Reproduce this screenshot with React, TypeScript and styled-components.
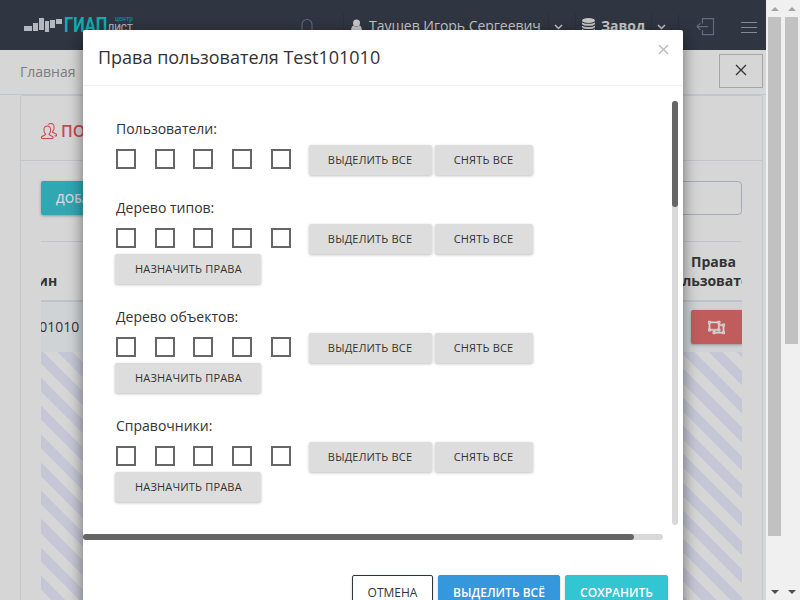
import React from "react";
import styled, { createGlobalStyle } from "styled-components";
import { SlPeople } from "react-icons/sl";
import { FaRegObjectUngroup } from "react-icons/fa";

const GlobalStyle = createGlobalStyle`
  * { box-sizing: border-box; }
  html, body { margin: 0; padding: 0; overflow: hidden; }
  body { font-family: "Open Sans", sans-serif; font-size: 14px; color: #333; }
  button { font-family: inherit; margin: 0; }
`;

const Screen = styled.div`
  position: relative;
  display: flex;
  width: 800px;
  height: 600px;
  overflow: hidden;
  background: #f0f0f0;
`;

const Page = styled.div`
  width: 766px;
  height: 600px;
  overflow: hidden;
  background: #d6d6d6;
`;

const TopBar = styled.header`
  display: flex;
  align-items: flex-start;
  height: 50px;
  background: #2f3541;
  color: #c6c6c6;
`;

const Logo = styled.div`
  display: flex;
  width: 114px;
  height: 20px;
  margin: 16px 0 0 24px;
`;

const LogoName = styled.span`
  margin-left: 2px;
  width: 44px;
  font: 700 19.5px/19px Roboto, sans-serif;
  color: #11abb2;
  transform: scaleX(0.84);
  transform-origin: left;
`;

const LogoSide = styled.span`
  display: flex;
  flex-direction: column;
  width: 25px;
  font: 700 6.5px/7px Roboto, sans-serif;
  color: #11838e;
  text-align: right;
`;

const LogoSub = styled.span`
  font: 500 11px/11px Roboto, sans-serif;
  color: #a9afb8;
  transform: translateX(-4px) scaleX(0.86);
  transform-origin: right;
`;

const Bell = styled.svg`
  width: 14px;
  height: 18px;
  margin: 18px 0 0 162px;
`;

const UserBox = styled.div`
  display: flex;
  height: 36px;
  margin: 14px 0 0 29px;
  padding-left: 7px;
  border-left: 1px solid #2a303b;
  font-size: 14px;
  line-height: 24px;
  white-space: nowrap;
  color: #c6c6c6;
`;

const PersonIcon = styled.svg`
  width: 11px;
  height: 14px;
  margin: 5px 7px 0 0;
`;

const UserName = styled.span`
  width: 179px;
  letter-spacing: -0.03px;
`;

const Caret = styled.svg`
  width: 9px;
  height: 6px;
  margin-top: 10px;
`;

const CaretBox = styled.div`
  display: flex;
  width: 28px;
  height: 36px;
  padding-left: 5px;
  border-left: 1px solid #2a303b;
  border-right: 1px solid #2a303b;
`;

const PlantBox = styled.div`
  display: flex;
  height: 36px;
  margin-top: 14px;
  padding-left: 6px;
  font-size: 14px;
  font-weight: 700;
  line-height: 24px;
`;

const DiskIcon = styled.svg`
  width: 13px;
  height: 14px;
  margin: 4px 6px 0 0;
`;

const PlantName = styled.span`
  width: 50px;
`;

const LogoutIcon = styled.svg`
  width: 19px;
  height: 18px;
  margin: 18px 0 0 17px;
`;

const Burger = styled.div`
  display: flex;
  flex-direction: column;
  width: 16px;
  height: 11px;
  margin: 22px 0 0 26px;
  border: solid #828a93;
  border-width: 1px 0;
  &::before { content: ""; height: 1px; margin-top: 4px; background: #828a93; }
`;

const Crumbs = styled.nav`
  display: flex;
  justify-content: space-between;
  height: 45px;
  padding: 4px 3px 0 20px;
  border-bottom: 1px solid #c1c6cc;
  color: #7d7d7d;
  line-height: 35px;
`;

const CloseTab = styled.button`
  display: flex;
  align-items: center;
  justify-content: center;
  width: 44px;
  height: 34px;
  padding: 0 0 2px;
  background: transparent;
  border: 1px solid #a5a5a5;
`;

const Card = styled.section`
  width: 743px;
  height: 560px;
  margin-left: 20px;
  border: 1px solid #c1c6cf;
  border-radius: 2px;
`;

const CardTitle = styled.div`
  display: flex;
  align-items: center;
  height: 65px;
  padding: 5px 20px 0;
  border-bottom: 1px solid #c3c5cb;
  color: #c8484f;
  font-size: 16px;
  font-weight: 600;
  gap: 4px;
`;

const CardBody = styled.div`
  padding: 20px 20px 0;
`;

const Tools = styled.div`
  display: flex;
  justify-content: space-between;
  height: 34px;
`;

const AddButton = styled.button`
  width: 120px;
  height: 34px;
  padding: 0 15px;
  border: 0;
  border-radius: 2px;
  background: #2fa8b4;
  box-shadow: 0 1px 3px rgba(0, 0, 0, 0.3);
  color: #d6d6d6;
  font-size: 12px;
  font-weight: 600;
  text-align: left;
`;

const SearchInput = styled.input`
  width: 200px;
  height: 34px;
  background: transparent;
  border: 1px solid #a3abb9;
  border-radius: 4px;
`;

const Table = styled.div`
  width: 701px;
  margin-top: 26px;
  overflow: hidden;
  border-top: 1px solid #c3c5cb;
`;

const TableHead = styled.div`
  display: flex;
  justify-content: space-between;
  align-items: flex-end;
  height: 60px;
  padding-bottom: 10px;
  border-bottom: 2px solid #c0c2cb;
  font-weight: 700;
  line-height: 19px;
`;

const LoginHead = styled.span`
  margin-left: -29px;
`;

const RightsHead = styled.span`
  width: 98px;
  margin-right: -20.5px;
  letter-spacing: -0.05px;
  text-align: center;
`;

const TableRow = styled.div`
  display: flex;
  justify-content: space-between;
  align-items: center;
  height: 50px;
  background: #d0d3d6;
`;

const LoginCell = styled.span`
  margin: -2px 0 0 -37px;
`;

const RightsButton = styled.button`
  display: flex;
  align-items: center;
  justify-content: center;
  width: 52px;
  height: 34px;
  margin: 0 -1px 0 0;
  padding: 0;
  border: 0;
  border-radius: 2px;
  background: #c15c5d;
  box-shadow: 0 1px 3px rgba(0, 0, 0, 0.3);
  color: #d6d6d6;
`;

const RightsIcon = styled(FaRegObjectUngroup)`
  width: 17px;
  height: 15px;
  margin-right: 1px;
  stroke: currentColor;
  stroke-width: 14px;
`;

const Stripes = styled.div`
  height: 279.5px;
  background: repeating-linear-gradient(45deg, #d6d6d6 0, #d6d6d6 10px, #c6c7d6 10px, #c6c7d6 20px);
`;

const Scrollbar = styled.div`
  display: flex;
  flex-direction: column;
  align-items: center;
  justify-content: space-between;
  width: 17px;
  height: 600px;
  padding: 7px 0 6px;
`;

const Thumb = styled.div<{ $length: number }>`
  width: 13px;
  height: ${(p) => p.$length}px;
  margin: 6px 0 auto;
  background: #c1c1c1;
`;

const Arrow = styled.i<{ $down?: boolean }>`
  border: solid transparent;
  border-width: ${(p) => (p.$down ? "4px 4px 0" : "0 4px 4px")};
  border-${(p) => (p.$down ? "top" : "bottom")}-color: ${(p) => (p.$down ? "#505050" : "#a3a3a3")};
`;

const Dialog = styled.div`
  position: absolute;
  left: 83px;
  top: 30px;
  width: 600px;
  height: 600px;
  background: #fff;
  border-radius: 2px;
  box-shadow: 0 5px 15px rgba(0, 0, 0, 0.5);
`;

const DialogHead = styled.div`
  display: flex;
  justify-content: space-between;
  height: 56px;
  padding: 14px 14px 0 15px;
  border-bottom: 1px solid #efefef;
  font-size: 18px;
  line-height: 27px;
`;

const CloseIcon = styled.svg<{ $size: number }>`
  width: ${(p) => p.$size}px;
  height: ${(p) => p.$size}px;
`;

const DialogBody = styled.div`
  display: flex;
  justify-content: space-between;
  height: 448px;
  padding: 15px 5px 0 33px;
`;

const Track = styled.div`
  width: 6px;
  height: 424px;
  border-radius: 3px;
  background: #d9d9d9;
  &::before { content: ""; display: block; height: 106px; border-radius: 3px; background: #666; }
`;

const WideTrack = styled.div`
  width: 580px;
  height: 6px;
  border-radius: 3px;
  background: #d9d9d9;
  &::before { content: ""; display: block; width: 551px; height: 6px; border-radius: 3px; background: #666; }
`;

const Groups = styled.div`
  padding-top: 18px;
`;

const Group = styled.div`
  margin-bottom: 23px;
`;

const GroupLabel = styled.div`
  height: 26px;
  line-height: 20px;
`;

const GroupRow = styled.div`
  display: flex;
  height: 30px;
`;

const Box = styled.span`
  flex: none;
  width: 20px;
  height: 20px;
  margin: 4px 18.7px 0 0;
  border: 2px solid #666;
`;

const GreyButton = styled.button<{ $width: number; $shift?: number }>`
  flex: none;
  width: ${(p) => p.$width}px;
  height: 30.4px;
  margin: 0 3px 0 ${(p) => p.$shift ?? 0}px;
  padding: 0;
  border: 0;
  border-radius: 2px;
  background: #ddd;
  box-shadow: 0 1px 3px rgba(0, 0, 0, 0.25);
  color: #333;
  font-size: 11px;
  font-weight: 500;
  letter-spacing: 0.18px;
  line-height: 30px;
  white-space: nowrap;
`;

const DialogFoot = styled.div`
  display: flex;
  justify-content: flex-end;
  gap: 5px;
  padding: 35px 15px 0;
`;

const FootButton = styled.button<{ $width: number; $color?: string }>`
  width: ${(p) => p.$width}px;
  height: 34px;
  padding: 0;
  border: 1px solid ${(p) => p.$color ?? "#2f353b"};
  border-radius: 2px;
  background: ${(p) => p.$color ?? "#fff"};
  box-shadow: 0 1px 3px rgba(0, 0, 0, 0.2);
  color: ${(p) => (p.$color ? "#fff" : "#2f353b")};
  font-size: 12px;
  font-weight: ${(p) => (p.$color ? 600 : 500)};
  white-space: nowrap;
`;

const Chevron = () => (
  <Caret viewBox="0 0 9 6" fill="none" stroke="#c6c6c6" strokeWidth="1.5">
    <path d="M1 1l3.500 3.500L8 1" />
  </Caret>
);

const Cross = ({ size, color, weight }: { size: number; color: string; weight: number }) => (
  <CloseIcon $size={size} viewBox="0 0 12 12" stroke={color} strokeWidth={weight}>
    <path d="M1 1l10 10M11 1L1 11" />
  </CloseIcon>
);

const groups = [
  { title: "Пользователи:", assign: false },
  { title: "Дерево типов:", assign: true },
  { title: "Дерево объектов:", assign: true },
  { title: "Справочники:", assign: true },
];

export default function App() {
  return (
    <Screen>
      <GlobalStyle />
      <Page>
        <TopBar>
          <Logo>
            <svg width="38" height="18" viewBox="0 0 38 18" fill="#b3b8c0">
              <path d="M0 10h8v5H0zM9 7h5v8H9zM15 2h5v12h-5zM21 5h4v11h-4zM26 4h5v8h-5zM32 3h6v5h-6z" />
            </svg>
            <LogoName>ГИАП</LogoName>
            <LogoSide>
              центр
              <LogoSub>ЛИСТ</LogoSub>
            </LogoSide>
          </Logo>
          <Bell viewBox="0 0 14 18" fill="none" stroke="#606b7c" strokeWidth="1.1">
            <path d="M2 13V6.500a5 5 0 0 1 10 0V13l1 2H1z" />
          </Bell>
          <UserBox>
            <PersonIcon viewBox="0 0 11 14" fill="#c6c6c6">
              <circle cx="5.500" cy="4" r="3.500" />
              <path d="M0 12.500C0 9 1 7 2.700 6.600a4.200 4.200 0 0 0 5.600 0C10 7 11 9 11 12.500z" />
            </PersonIcon>
            <UserName>Таушев Игорь Сергеевич</UserName>
            <CaretBox><Chevron /></CaretBox>
          </UserBox>
          <PlantBox>
            <DiskIcon viewBox="0 0 13 14" fill="#c6c6c6">
              <ellipse cx="6.500" cy="2.500" rx="6.500" ry="2.500" />
              <path d="M0 4.200c2 2 11 2 13 0v1.700c-1 2.500-12 2.500-13 0zM0 7.500c2 2 11 2 13 0v1.700c-1 2.500-12 2.500-13 0zM0 10.800c2 2 11 2 13 0v1.200c-1 2.500-12 2.500-13 0z" />
            </DiskIcon>
            <PlantName>Завод</PlantName>
            <CaretBox><Chevron /></CaretBox>
          </PlantBox>
          <LogoutIcon viewBox="0 0 19 18" fill="none" stroke="#606b7c" strokeWidth="1.200">
            <path d="M6.500 5.500V.6h11v16h-11v-4.600M1 8.600h11M4.500 5.100L1 8.600l3.500 3.500" />
          </LogoutIcon>
          <Burger />
        </TopBar>
        <Crumbs>
          Главная
          <CloseTab><Cross size={12} color="#333" weight={1.3} /></CloseTab>
        </Crumbs>
        <Card>
          <CardTitle>
            <SlPeople size={16} />
            ПОЛЬЗОВАТЕЛИ
          </CardTitle>
          <CardBody>
            <Tools>
              <AddButton>ДОБАВИТЬ</AddButton>
              <SearchInput />
            </Tools>
            <Table>
              <TableHead>
                <LoginHead>Логин</LoginHead>
                <RightsHead>Права пользователя</RightsHead>
              </TableHead>
              <TableRow>
                <LoginCell>Test101010</LoginCell>
                <RightsButton><RightsIcon /></RightsButton>
              </TableRow>
              <Stripes />
            </Table>
          </CardBody>
        </Card>
      </Page>
      <Scrollbar><Arrow /><Thumb $length={519} /><Arrow $down /></Scrollbar>
      <Scrollbar><Arrow /><Thumb $length={327} /><Arrow $down /></Scrollbar>
      <Dialog>
        <DialogHead>
          Права пользователя Test101010
          <Cross size={11} color="#bbb" weight={1.5} />
        </DialogHead>
        <DialogBody>
          <Groups>
            {groups.map((g) => (
              <Group key={g.title}>
                <GroupLabel>{g.title}</GroupLabel>
                <GroupRow>
                  <Box /><Box /><Box /><Box /><Box />
                  <GreyButton $width={123} $shift={-0.9}>ВЫДЕЛИТЬ ВСЕ</GreyButton>
                  <GreyButton $width={98}>СНЯТЬ ВСЕ</GreyButton>
                </GroupRow>
                {g.assign && (
                  <GroupRow>
                    <GreyButton $width={146} $shift={-0.6}>НАЗНАЧИТЬ ПРАВА</GreyButton>
                  </GroupRow>
                )}
              </Group>
            ))}
          </Groups>
          <Track />
        </DialogBody>
        <WideTrack />
        <DialogFoot>
          <FootButton $width={81}>ОТМЕНА</FootButton>
          <FootButton $width={122} $color="#3598dc">ВЫДЕЛИТЬ ВСЁ</FootButton>
          <FootButton $width={103} $color="#32c5d2">СОХРАНИТЬ</FootButton>
        </DialogFoot>
      </Dialog>
    </Screen>
  );
}
